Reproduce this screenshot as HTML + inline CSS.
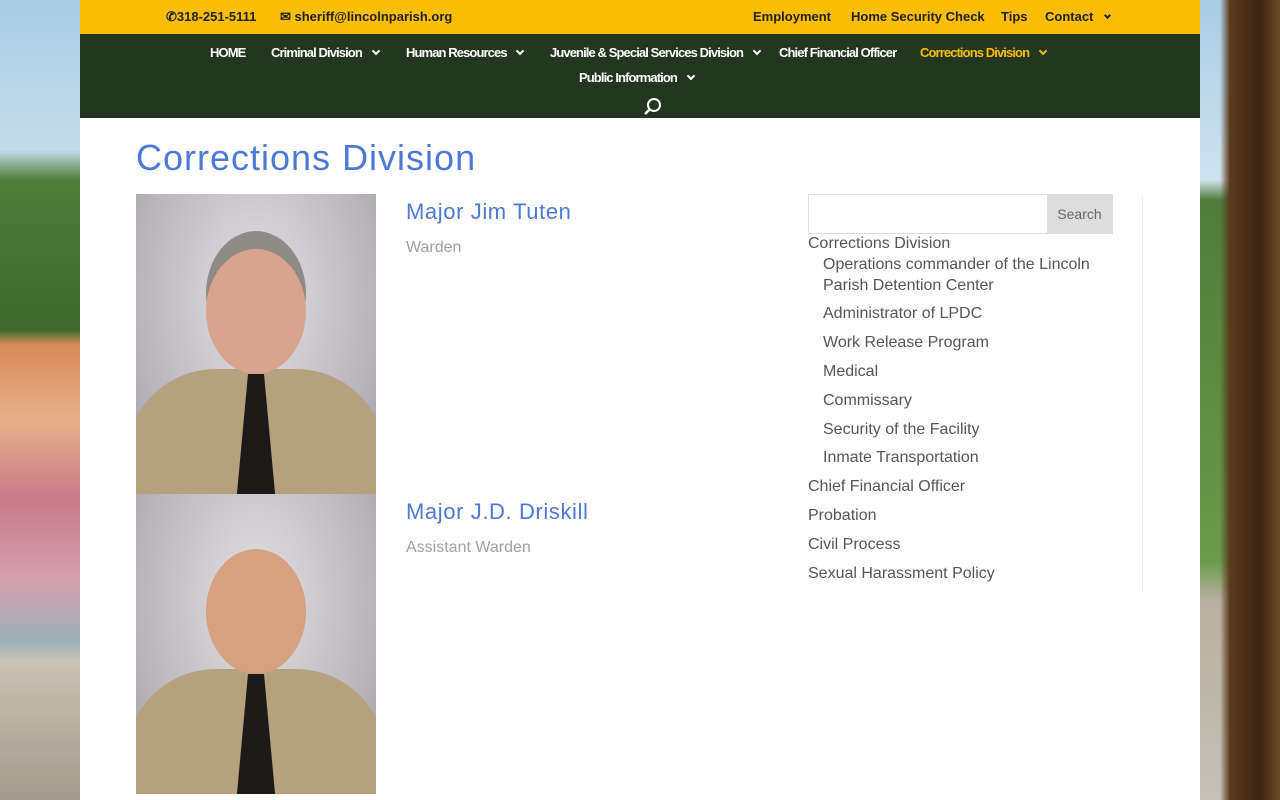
<!DOCTYPE html>
<html><head><meta charset="utf-8"><style>
*{margin:0;padding:0;box-sizing:border-box}
body{width:1280px;height:800px;overflow:hidden;font-family:"Liberation Sans",sans-serif;position:relative;background:#8ab}
.lbg{position:absolute;left:0;top:0;width:80px;height:800px;background:linear-gradient(180deg,#a9cde6 0,#c4dcea 150px,#4f7d3a 180px,#3d6a2c 330px,#d88a5a 345px,#e7b08a 420px,#c87a8a 500px,#d5a0b0 580px,#9bb0b8 640px,#c9c2b5 660px,#a39b8e 800px)}
.rbg{position:absolute;left:1200px;top:0;width:80px;height:800px;background:linear-gradient(90deg,transparent 0,transparent 20px,#5a3a1c 30px,#3b2412 60px,#6a4a28 80px),linear-gradient(180deg,#a9cde6 0,#cfe2ee 180px,#4f7d3a 200px,#6a9a4a 560px,#b8b0a0 600px,#c5c0b8 800px)}
.page{position:absolute;left:80px;top:0;width:1120px;height:800px;background:#fff}
.top{height:34px;background:#fcbe04;position:relative;font-size:13px;color:#222}
.top span{position:absolute;top:9px;font-weight:bold}
.nav{height:84px;background:#233620;position:relative;color:#fff;font-size:13px;font-weight:bold;letter-spacing:-.9px}
.nav span{position:absolute;white-space:nowrap}
.c{display:inline-block;width:6px;height:6px;border-right:2px solid currentColor;border-bottom:2px solid currentColor;transform:rotate(45deg);margin-left:8px;position:relative;top:-3px}
h1{position:absolute;left:56px;top:137px;font-size:36px;font-weight:normal;color:#4d78d8;letter-spacing:1px;}
.photo{position:absolute;left:56px;width:240px;height:300px;background:radial-gradient(ellipse at 50% 35%,#e4e2e5 0,#b7b4ba 70%,#9e9ba2 100%);overflow:hidden}
.photo .head{position:absolute;left:70px;top:55px;width:100px;height:125px;border-radius:50%;background:#d9a98f}
.photo .body{position:absolute;left:-10px;top:175px;width:260px;height:160px;border-radius:90px 90px 0 0;background:#b5a17e}
.photo .tie{position:absolute;left:100px;top:180px;width:40px;height:130px;background:#1c1a18;clip-path:polygon(30% 0,70% 0,100% 100%,0 100%)}
.name{position:absolute;left:326px;font-size:22px;color:#4d78d8;letter-spacing:.6px}
.role{position:absolute;left:326px;font-size:16px;color:#a0a0a0}
.sbox{position:absolute;left:728px;top:194px;width:305px;height:40px;border:1px solid #ddd}
.sbtn{position:absolute;right:0;top:0;width:65px;height:38px;background:#ddd;color:#666;font-size:14px;text-align:center;line-height:38px}
.vl{position:absolute;left:1062px;top:194px;width:1px;height:398px;background:#eee}
.li{position:absolute;font-size:16px;color:#555;line-height:21px}
</style></head><body>
<div class="lbg"></div><div class="rbg"></div>
<div class="page">
<div class="top">
<span style="left:86px">✆318-251-5111</span>
<span style="left:200px">✉ sheriff@lincolnparish.org</span>
<span style="left:673px">Employment</span>
<span style="left:771px">Home Security Check</span>
<span style="left:921px">Tips</span>
<span style="left:965px">Contact <i class="c" style="width:5px;height:5px"></i></span>
</div>
<div class="nav">
<span style="left:130px;top:11px">HOME</span>
<span style="left:191px;top:11px">Criminal Division <i class="c"></i></span>
<span style="left:326px;top:11px">Human Resources <i class="c"></i></span>
<span style="left:470px;top:11px">Juvenile &amp; Special Services Division <i class="c"></i></span>
<span style="left:699px;top:11px">Chief Financial Officer</span>
<span style="left:840px;top:11px;color:#fcbe04">Corrections Division <i class="c"></i></span>
<span style="left:499px;top:36px">Public Information <i class="c"></i></span>
<svg style="position:absolute;left:563px;top:63px" width="20" height="20" viewBox="0 0 20 20"><circle cx="11" cy="8" r="6" fill="none" stroke="#fff" stroke-width="2"/><path d="M7 12L2 17" stroke="#fff" stroke-width="2.4"/></svg>
</div>
<h1>Corrections Division</h1>
<div class="photo" style="top:194px"><div class="body"></div><div class="head" style="background:#d9a48d;box-shadow:0 -18px 0 #8f8c88"></div><div class="tie"></div></div>
<div class="photo" style="top:494px"><div class="body"></div><div class="head" style="background:#d7a07f"></div><div class="tie"></div></div>
<div class="name" style="top:199px">Major Jim Tuten</div>
<div class="role" style="top:239px">Warden</div>
<div class="name" style="top:499px">Major J.D. Driskill</div>
<div class="role" style="top:539px">Assistant Warden</div>
<div class="sbox"><div class="sbtn">Search</div></div>
<div class="vl"></div>
<div class="li" style="left:728px;top:233px">Corrections Division</div>
<div class="li" style="left:743px;top:254px">Operations commander of the Lincoln<br>Parish Detention Center</div>
<div class="li" style="left:743px;top:303px">Administrator of LPDC</div>
<div class="li" style="left:743px;top:332px">Work Release Program</div>
<div class="li" style="left:743px;top:361px">Medical</div>
<div class="li" style="left:743px;top:390px">Commissary</div>
<div class="li" style="left:743px;top:419px">Security of the Facility</div>
<div class="li" style="left:743px;top:447px">Inmate Transportation</div>
<div class="li" style="left:728px;top:476px">Chief Financial Officer</div>
<div class="li" style="left:728px;top:505px">Probation</div>
<div class="li" style="left:728px;top:534px">Civil Process</div>
<div class="li" style="left:728px;top:563px">Sexual Harassment Policy</div>
</div>
</body></html>
